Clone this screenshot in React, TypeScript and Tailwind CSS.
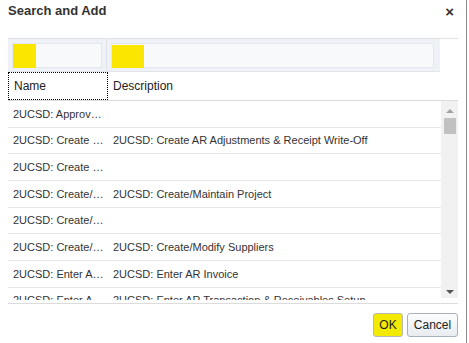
import React from 'react'

const rows: [string, string][] = [
  ['2UCSD: Approv…', ''],
  ['2UCSD: Create …', '2UCSD: Create AR Adjustments & Receipt Write-Off'],
  ['2UCSD: Create …', ''],
  ['2UCSD: Create/…', '2UCSD: Create/Maintain Project'],
  ['2UCSD: Create/…', ''],
  ['2UCSD: Create/…', '2UCSD: Create/Modify Suppliers'],
  ['2UCSD: Enter A…', '2UCSD: Enter AR Invoice'],
  ['2UCSD: Enter A…', '2UCSD: Enter AR Transaction & Receivables Setup'],
]

export default function App() {
  return (
    <div className="w-[469px] h-[343px] bg-white overflow-hidden flex" style={{ fontFamily: '"Liberation Sans", Arial, sans-serif' }}>
      <div className="w-[467px] h-full border-r border-[#8a8a8a] flex flex-col">
        {/* title bar */}
        <div className="h-[38px] flex items-start justify-between pl-[8px] pr-[12px] pt-[1px]">
          <h1 className="text-[13px] font-bold text-[#333]">Search and Add</h1>
          <span className="text-[15px] font-bold text-[#333] leading-none mt-[3px]">×</span>
        </div>

        <div className="ml-[8px] w-[450px]">
          {/* filter row */}
          <div className="flex h-[34px] border-t border-[#dfe3e8]">
            <div className="w-[432px] flex bg-[#eef1f5] border-b border-[#e2e6eb]">
              <div className="w-[99px] border-r border-[#e0e4e9] pl-[4px] pt-[4px]">
                <div className="w-[90px] h-[25px] bg-[#f8f9fb] border border-[#e4e7eb]">
                  <div className="w-[23px] h-[24px] bg-[#fbe600]" />
                </div>
              </div>
              <div className="pl-[4px] pt-[4px]">
                <div className="w-[323px] h-[25px] bg-[#f8f9fb] border border-[#e4e7eb] pt-[1px]">
                  <div className="w-[32px] h-[23px] bg-[#fbe600]" />
                </div>
              </div>
            </div>
          </div>

          {/* header row */}
          <div className="flex h-[29px] border-b border-[#dcdcdc] text-[12px] text-[#222]">
            <div className="w-[100px] border border-dotted border-black pl-[5px] flex items-center">Name</div>
            <div className="pl-[5px] flex items-center">Description</div>
          </div>

          {/* body */}
          <div className="flex h-[203px] border-b border-[#dcdcdc]">
            <div className="w-[433px] h-[199px] overflow-hidden">
              {rows.map(([name, desc], i) => (
                <div key={i} className="flex h-[26.7px] border-b border-[#e6e6e6] text-[11px] text-[#333] items-center">
                  <div className="w-[99px] pl-[5px] whitespace-nowrap overflow-hidden">{name}</div>
                  <div className="pl-[6px] whitespace-nowrap">{desc}</div>
                </div>
              ))}
            </div>
            <div className="w-[17px] h-[197px] bg-[#f1f1f1] flex flex-col items-center">
              <div className="mt-[8px] w-0 h-0 border-l-[4px] border-r-[4px] border-b-[4px] border-l-transparent border-r-transparent border-b-[#a3a3a3]" />
              <div className="mt-[5px] w-[12px] h-[16px] bg-[#c1c1c1]" />
              <div className="flex-1" />
              <div className="mb-[4px] w-0 h-0 border-l-[4px] border-r-[4px] border-t-[4px] border-l-transparent border-r-transparent border-t-[#555]" />
            </div>
          </div>
        </div>

        {/* footer */}
        <div className="flex justify-end gap-[4px] pr-[8px] mt-[9px]">
          <button className="w-[30px] h-[24px] bg-[#f2ea00] border border-[#b8b8b8] rounded-[3px] text-[12px] text-[#222]">OK</button>
          <button className="w-[51px] h-[24px] bg-gradient-to-b from-[#fbfcfd] to-[#e8ecf0] border border-[#a9b2bc] rounded-[3px] text-[12px] text-[#222]">Cancel</button>
        </div>
      </div>
    </div>
  )
}
